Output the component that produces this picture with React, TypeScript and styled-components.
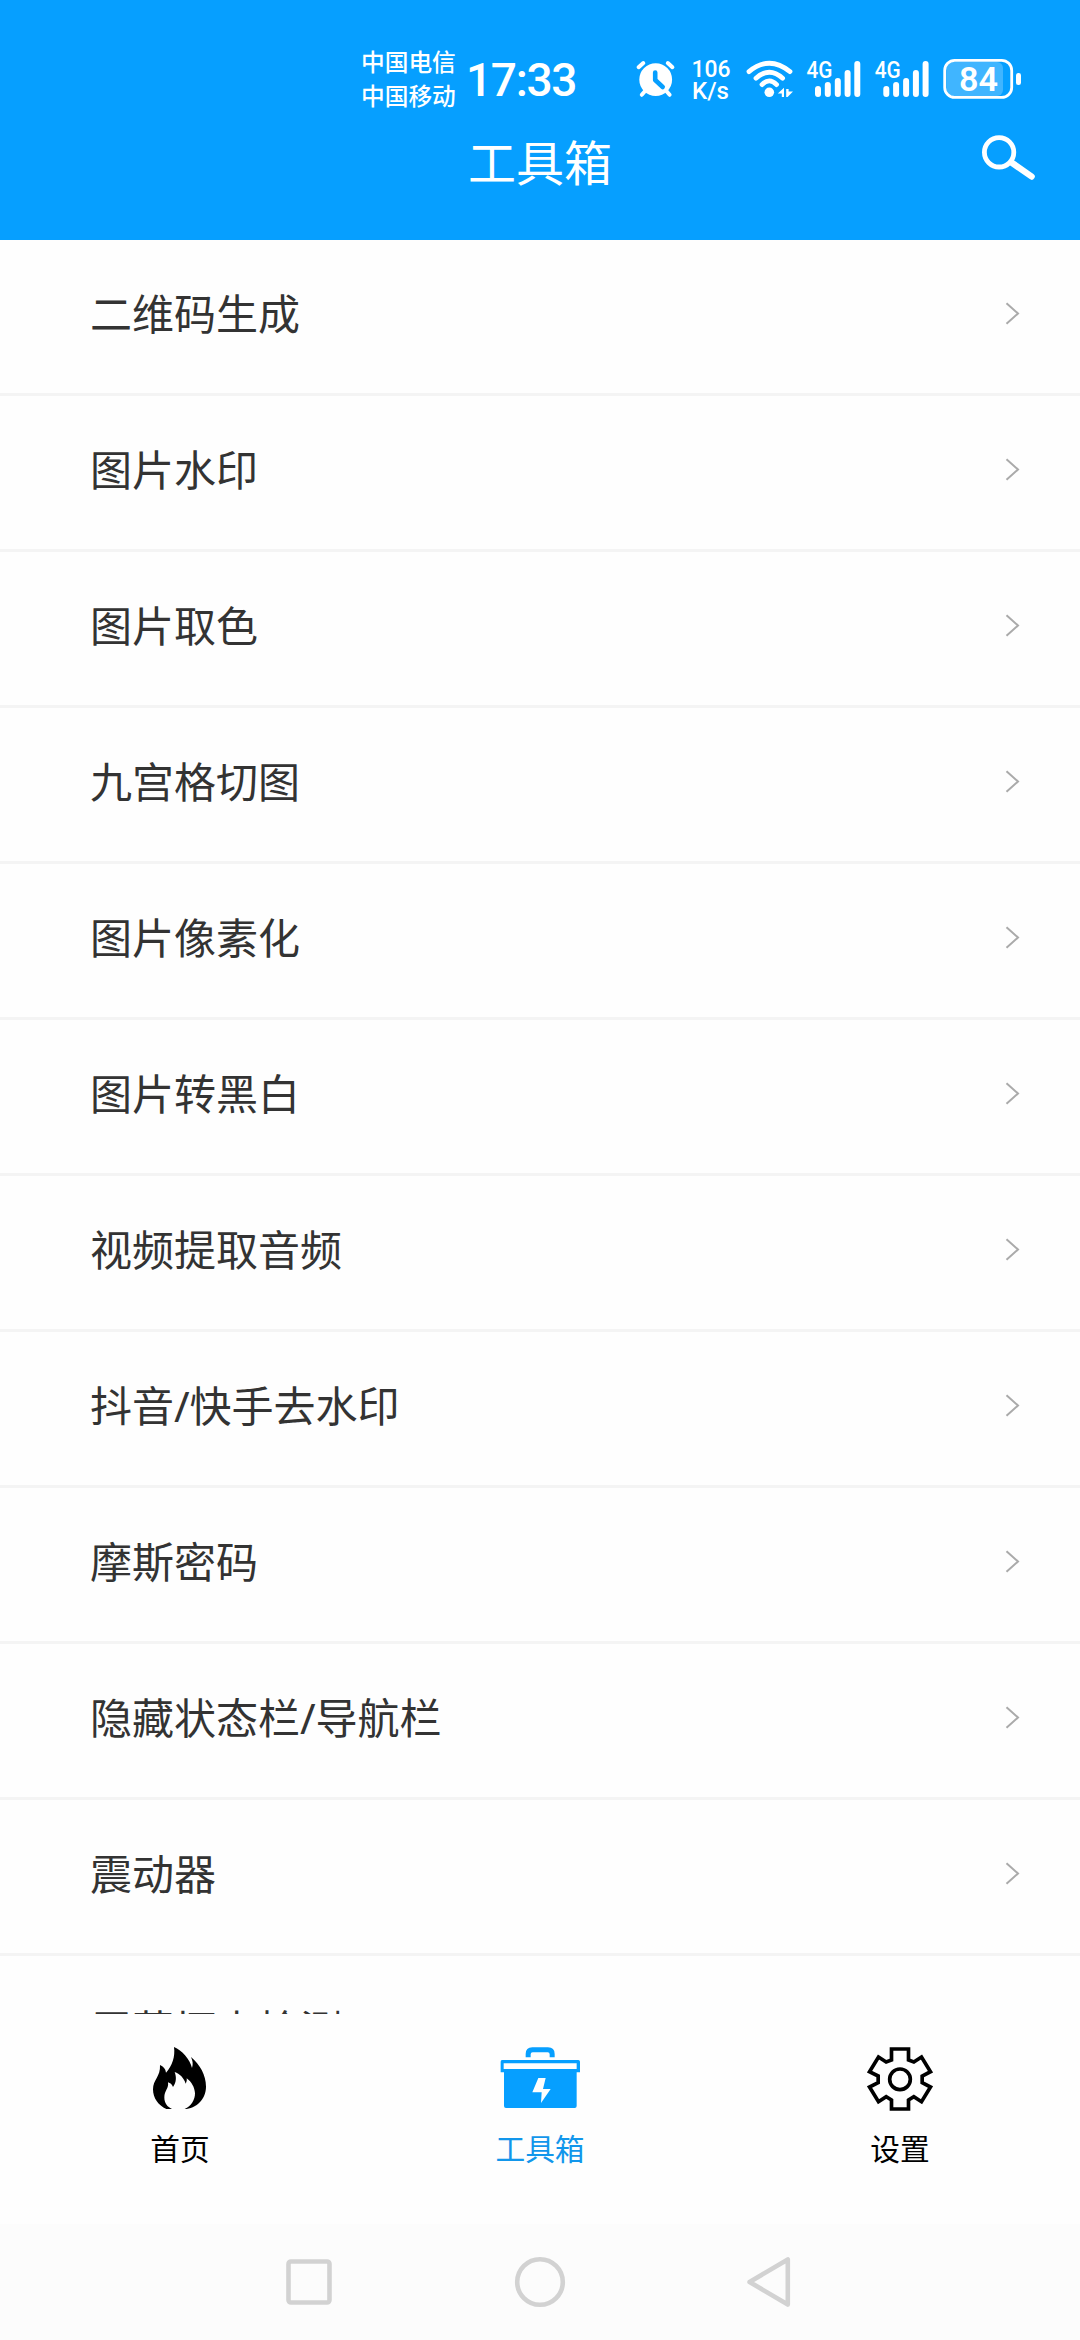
import React from "react";
import styled, { createGlobalStyle } from "styled-components";

const BLUE = "#069fff";

const GlobalStyle = createGlobalStyle`
  * { box-sizing: border-box; }
  body {
    margin: 0;
    background: #fff;
    font-family: "Noto Sans CJK SC", sans-serif;
  }
`;

const Screen = styled.div`
  display: flex;
  flex-direction: column;
  width: 1080px;
  height: 2340px;
  overflow: hidden;
  background: #fefefe;
`;

const Header = styled.header`
  flex: none;
  height: 240px;
  background: ${BLUE};
  color: #fff;
`;

const StatusBar = styled.div`
  display: flex;
  align-items: center;
  height: 110px;
  padding: 48px 0 0 361px;
`;

const Carriers = styled.div`
  width: 96px;
  margin-right: 9px;
  padding-bottom: 2px;
  font-size: 23.7px;
  font-weight: 500;
  line-height: 34px;
  white-space: nowrap;
`;

const Clock = styled.div`
  width: 167px;
  padding-top: 1px;
  font-family: Roboto, sans-serif;
  font-size: 46px;
  font-weight: 500;
  letter-spacing: -1.3px;
  line-height: 62px;
`;

const StatusIcons = styled.svg`
  display: block;
  width: 400px;
  height: 62px;
  font-family: Roboto, sans-serif;
  font-weight: 500;
`;

const TitleBar = styled.div`
  display: grid;
  grid-template-columns: 80px 1fr 80px;
  align-items: center;
  height: 104px;
`;

const Title = styled.h1`
  grid-column: 2;
  margin: 0;
  padding-bottom: 5px;
  font-size: 48px;
  font-weight: 400;
  line-height: 60px;
  text-align: center;
`;

const SearchButton = styled.button`
  width: 60px;
  height: 50px;
  margin-top: -10px;
  margin-left: -23px;
  padding: 0;
  border: 0;
  background: none;
  svg { display: block; }
`;

const List = styled.main`
  flex: none;
  height: 1774px;
  overflow: hidden;
`;

const Row = styled.div`
  display: flex;
  align-items: center;
  justify-content: space-between;
  height: 156px;
  padding: 0 60px 6px 90px;
  border-bottom: 3px solid #f4f4f4;
  color: #333;
  font-family: "Noto Sans", "Noto Sans CJK SC", sans-serif;
  font-size: 42px;
  line-height: 60px;
  svg { display: block; }
`;

const RowLabel = styled.span`
  padding-top: 1px;
`;

const TabBar = styled.nav`
  display: grid;
  grid-template-columns: repeat(3, 1fr);
  flex: none;
  height: 210px;
  padding-top: 27px;
`;

const Tab = styled.div<{ $active?: boolean }>`
  display: flex;
  flex-direction: column;
  align-items: center;
  gap: 9px;
  color: ${(p) => (p.$active ? "#1296eb" : "#000")};
  font-size: 29.7px;
  line-height: 44px;
  svg { display: block; }
`;

const SystemNav = styled.footer`
  display: flex;
  flex: 1;
  align-items: center;
  gap: 180px;
  padding: 0 0 0 284px;
  background: #fcfcfc;
  svg { display: block; }
`;

const Chevron = () => (
  <svg width="15" height="23" viewBox="0 0 15 23" fill="none" stroke="#aaa" strokeWidth="2">
    <path d="M1.5 1.2 L13 11.5 L1.5 21.8" />
  </svg>
);

const Signal = ({ x }: { x: number }) => (
  <g transform={`translate(${x} 0)`}>
    <text x="-1" y="30.3" fontSize="24" textLength="26" lengthAdjust="spacingAndGlyphs">4G</text>
    <g stroke="#fff" strokeWidth="6" strokeLinecap="round">
      <path d="M10.5 41v5M20.3 37v9M30.3 33v13M40.1 25v21M49.8 16v30" />
    </g>
  </g>
);

const StatusGlyphs = () => (
  <StatusIcons viewBox="633 48 400 62" fill="#fff">
    <circle cx="655.7" cy="79.6" r="16.4" />
    <g stroke="#fff" strokeWidth="4" strokeLinecap="round">
      <path d="M638.6 67.2 L643.3 63M672.4 67.2 L667.8 63M646 90 L641.8 94.8M665.5 90 L669.6 94.8" />
    </g>
    <path d="M655.2 72.5v7.5l7.5 7" fill="none" stroke={BLUE} strokeWidth="4.6" strokeLinecap="round" strokeLinejoin="round" />
    <text x="691.5" y="77" fontSize="24.5" textLength="39" lengthAdjust="spacingAndGlyphs">106</text>
    <text x="692" y="99" fontSize="24.5" textLength="37" lengthAdjust="spacingAndGlyphs">K/s</text>
    <g fill="none" stroke="#fff" strokeWidth="4.8" strokeLinecap="round">
      <path d="M749 71.6Q769.3 54.8 790 71.6M756 78.2Q769.3 66.2 782.6 78.2M762 84.6Q769.3 77 776.6 84.6" />
    </g>
    <circle cx="769.3" cy="92.3" r="4.8" />
    <path d="M777.8 93.6L784 87.8V97H781.8V93.6ZM786.2 89V97H787.6L793 91.4H788.6V89Z" />
    <g transform="translate(0 48)">
      <Signal x={807.5} />
      <Signal x={875.8} />
    </g>
    <rect x="946.5" y="62" width="56.5" height="34" rx="6" fill="#40b5ff" />
    <rect x="944.7" y="60.4" width="67" height="37" rx="10" fill="none" stroke="#fff" strokeWidth="2.8" />
    <rect x="1016" y="73" width="5" height="12" rx="2.3" />
    <text x="959" y="91" fontSize="34" fontWeight="600" textLength="39" lengthAdjust="spacingAndGlyphs">84</text>
  </StatusIcons>
);

const FlameIcon = () => (
  <svg width="72" height="76" viewBox="252 243 216 228" fill="currentColor">
    <path d="M342 261C366 271 390 298 396 324C400 312 398 302 393 291C420 314 438 345 438 380C438 418 408 446 374 447C394 438 405 420 405 400C404 382 395 366 380 355C381 361 380 366 377 371C372 354 359 341 344 336C350 352 349 368 339 381C336 373 331 369 324 367C327 386 313 392 313 412C313 430 322 441 336 447H319C295 436 279 415 279 388C279 358 302 351 300 315C310 319 317 327 318 338C337 317 346 290 342 261Z" />
  </svg>
);

const ToolboxIcon = () => (
  <svg width="84" height="76" viewBox="172 63 252 228" fill="#069fff">
    <path d="M255 112V102Q255 82 275 82H322Q342 82 342 102V112H327V103Q327 97 321 97H276Q270 97 270 103V112Z" />
    <path fillRule="evenodd" d="M184 120H413Q418 120 418 125V157H408V258Q408 264 402 264H196Q190 264 190 258V157H180V125Q180 120 184 120ZM189 130V147H408V130ZM293 174L275 217H303L301 249L330 207H307L315 174Z" />
  </svg>
);

const GearIcon = () => (
  <svg width="76" height="76" viewBox="125.5 63 228 228" fill="none" stroke="currentColor" strokeWidth="11">
    <path d="M214 87H265V120L281 126L304 111L331 155L306 168V188L331 201L304 245L281 230L265 240V267H214V240L198 230L175 245L148 201L174 188V168L148 155L175 111L198 126L214 120Z" />
    <circle cx="239.5" cy="178" r="31" strokeWidth="11" />
  </svg>
);

const rows = [
  "二维码生成",
  "图片水印",
  "图片取色",
  "九宫格切图",
  "图片像素化",
  "图片转黑白",
  "视频提取音频",
  "抖音/快手去水印",
  "摩斯密码",
  "隐藏状态栏/导航栏",
  "震动器",
  "屏幕坏点检测",
];

export default function App() {
  return (
    <>
      <GlobalStyle />
      <Screen>
        <Header>
          <StatusBar>
            <Carriers>
              <div>中国电信</div>
              <div>中国移动</div>
            </Carriers>
            <Clock>17:33</Clock>
            <StatusGlyphs />
          </StatusBar>
          <TitleBar>
            <Title>工具箱</Title>
            <SearchButton aria-label="搜索">
              <svg width="60" height="50" viewBox="977 132 60 50" fill="none" stroke="#fff">
                <circle cx="999.1" cy="152.3" r="14.7" strokeWidth="4.8" />
                <path d="M1012 162.8L1031.6 176.5" strokeWidth="6.4" strokeLinecap="round" />
              </svg>
            </SearchButton>
          </TitleBar>
        </Header>
        <List>
          {rows.map((label) => (
            <Row key={label}>
              <RowLabel>{label}</RowLabel>
              <Chevron />
            </Row>
          ))}
        </List>
        <TabBar>
          <Tab>
            <FlameIcon />
            <span>首页</span>
          </Tab>
          <Tab $active>
            <ToolboxIcon />
            <span>工具箱</span>
          </Tab>
          <Tab>
            <GearIcon />
            <span>设置</span>
          </Tab>
        </TabBar>
        <SystemNav>
          <svg width="50" height="54" fill="none" stroke="#d2d2d2" strokeWidth="4.6">
            <rect x="4.5" y="6.5" width="41" height="41" rx="2.5" />
          </svg>
          <svg width="52" height="54" fill="none" stroke="#d2d2d2" strokeWidth="4.6">
            <circle cx="26" cy="27" r="22.8" />
          </svg>
          <svg width="50" height="54" fill="none" stroke="#d2d2d2" strokeWidth="4.6" strokeLinejoin="round">
            <path d="M3.6 27L41.8 4.4V49.6Z" />
          </svg>
        </SystemNav>
      </Screen>
    </>
  );
}
